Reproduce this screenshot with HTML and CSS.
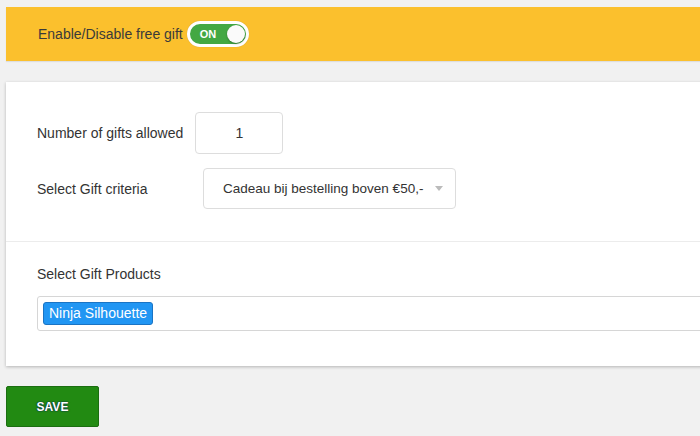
FILE: index.html
```html
<!DOCTYPE html>
<html>
<head>
<meta charset="utf-8">
<link rel="stylesheet" href="styles.css">
</head>
<body>
<div class="wrap">
  <div class="banner">
    <span class="banner-label">Enable/Disable free gift</span>
    <span class="toggle"><span class="toggle-text">ON</span><span class="knob"></span></span>
  </div>
  <div class="card">
    <div class="section top">
      <div class="row">
        <span class="label">Number of gifts allowed</span>
        <div class="num-input">1</div>
      </div>
      <div class="row">
        <span class="label fixed">Select Gift criteria</span>
        <div class="select">
          <span>Cadeau bij bestelling boven €50,-</span>
          <span class="arrow"></span>
        </div>
      </div>
    </div>
    <div class="section bottom">
      <div class="label">Select Gift Products</div>
      <div class="tags-input">
        <span class="tag">Ninja Silhouette</span>
      </div>
    </div>
  </div>
  <button class="save">SAVE</button>
</div>
</body>
</html>
```
FILE: styles.css
```css
html, body {
  margin: 0;
  padding: 0;
  overflow: hidden;
  background: #f1f1f1;
  font-family: "Liberation Sans", Arial, sans-serif;
  color: #333;
}
.wrap {
  width: 694px;
  padding: 7px 0 12px 6px;
  overflow: hidden;
}
.banner {
  width: calc(100% + 8px);
  height: 54px;
  background: #fbc02d;
  display: flex;
  align-items: center;
  padding-left: 32px;
  box-sizing: border-box;
  box-shadow: 0 1px 1px rgba(0,0,0,0.08);
}
.banner-label {
  font-size: 14px;
  color: #3a3a3a;
}
.toggle {
  margin-left: 4px;
  width: 56px;
  height: 20px;
  border: 3px solid #fff;
  border-radius: 14px;
  background: #43a843;
  display: flex;
  align-items: center;
  justify-content: space-between;
  box-shadow: 0 0 1px rgba(0,0,0,0.2);
}
.toggle-text {
  color: #fff;
  font-weight: bold;
  font-size: 11px;
  margin-left: 10px;
}
.knob {
  width: 18px;
  height: 18px;
  border-radius: 50%;
  background: #fafafa;
  margin-right: 1px;
  box-shadow: 0 1px 2px rgba(0,0,0,0.3);
}
.card {
  width: calc(100% + 8px);
  margin-top: 21px;
  background: #fff;
  box-shadow: 0 1px 3px rgba(0,0,0,0.25);
}
.section.top {
  padding: 30px 0 32px 31px;
  border-bottom: 1px solid #ececec;
  display: flex;
  flex-direction: column;
  gap: 14px;
}
.row {
  display: flex;
  align-items: center;
}
.label {
  font-size: 14px;
  color: #333;
}
.row .label {
  margin-right: 12px;
}
.row .label.fixed {
  width: 166px;
  margin-right: 0;
}
.num-input {
  width: 86px;
  height: 40px;
  border: 1px solid #ddd;
  border-radius: 4px;
  display: flex;
  align-items: center;
  justify-content: center;
  font-size: 14px;
}
.select {
  border: 1px solid #ddd;
  border-radius: 4px;
  display: flex;
  align-items: center;
  justify-content: space-between;
  padding: 0 12px 0 19px;
  box-sizing: border-box;
  width: 253px;
  height: 41px;
  font-size: 13.5px;
}
.arrow {
  width: 0;
  height: 0;
  border-left: 4px solid transparent;
  border-right: 4px solid transparent;
  border-top: 5px solid #bbb;
}
.section.bottom {
  padding: 24px 0 35px 31px;
}
.section.bottom .label {
  margin-bottom: 14px;
}
.tags-input {
  height: 33px;
  border: 1px solid #d6d6d6;
  border-radius: 3px;
  display: flex;
  align-items: center;
  padding-left: 5px;
}
.tag {
  background: #2196f3;
  border: 1px solid #1a74c4;
  border-radius: 3px;
  color: #fff;
  font-size: 14px;
  padding: 0 5px;
  height: 21px;
  line-height: 21px;
}
.save {
  margin-top: 20px;
  width: 93px;
  height: 41px;
  background: #228a12;
  border: 1px solid #1b6e10;
  border-radius: 2px;
  color: #fff;
  font-family: "Liberation Sans", Arial, sans-serif;
  font-weight: bold;
  font-size: 12px;
  text-shadow: 0 0 1px #0a3b4a, 0 0 1px #0a3b4a, 0 0 2px #0a3b4a;
  padding: 0;
  cursor: pointer;
}
```
